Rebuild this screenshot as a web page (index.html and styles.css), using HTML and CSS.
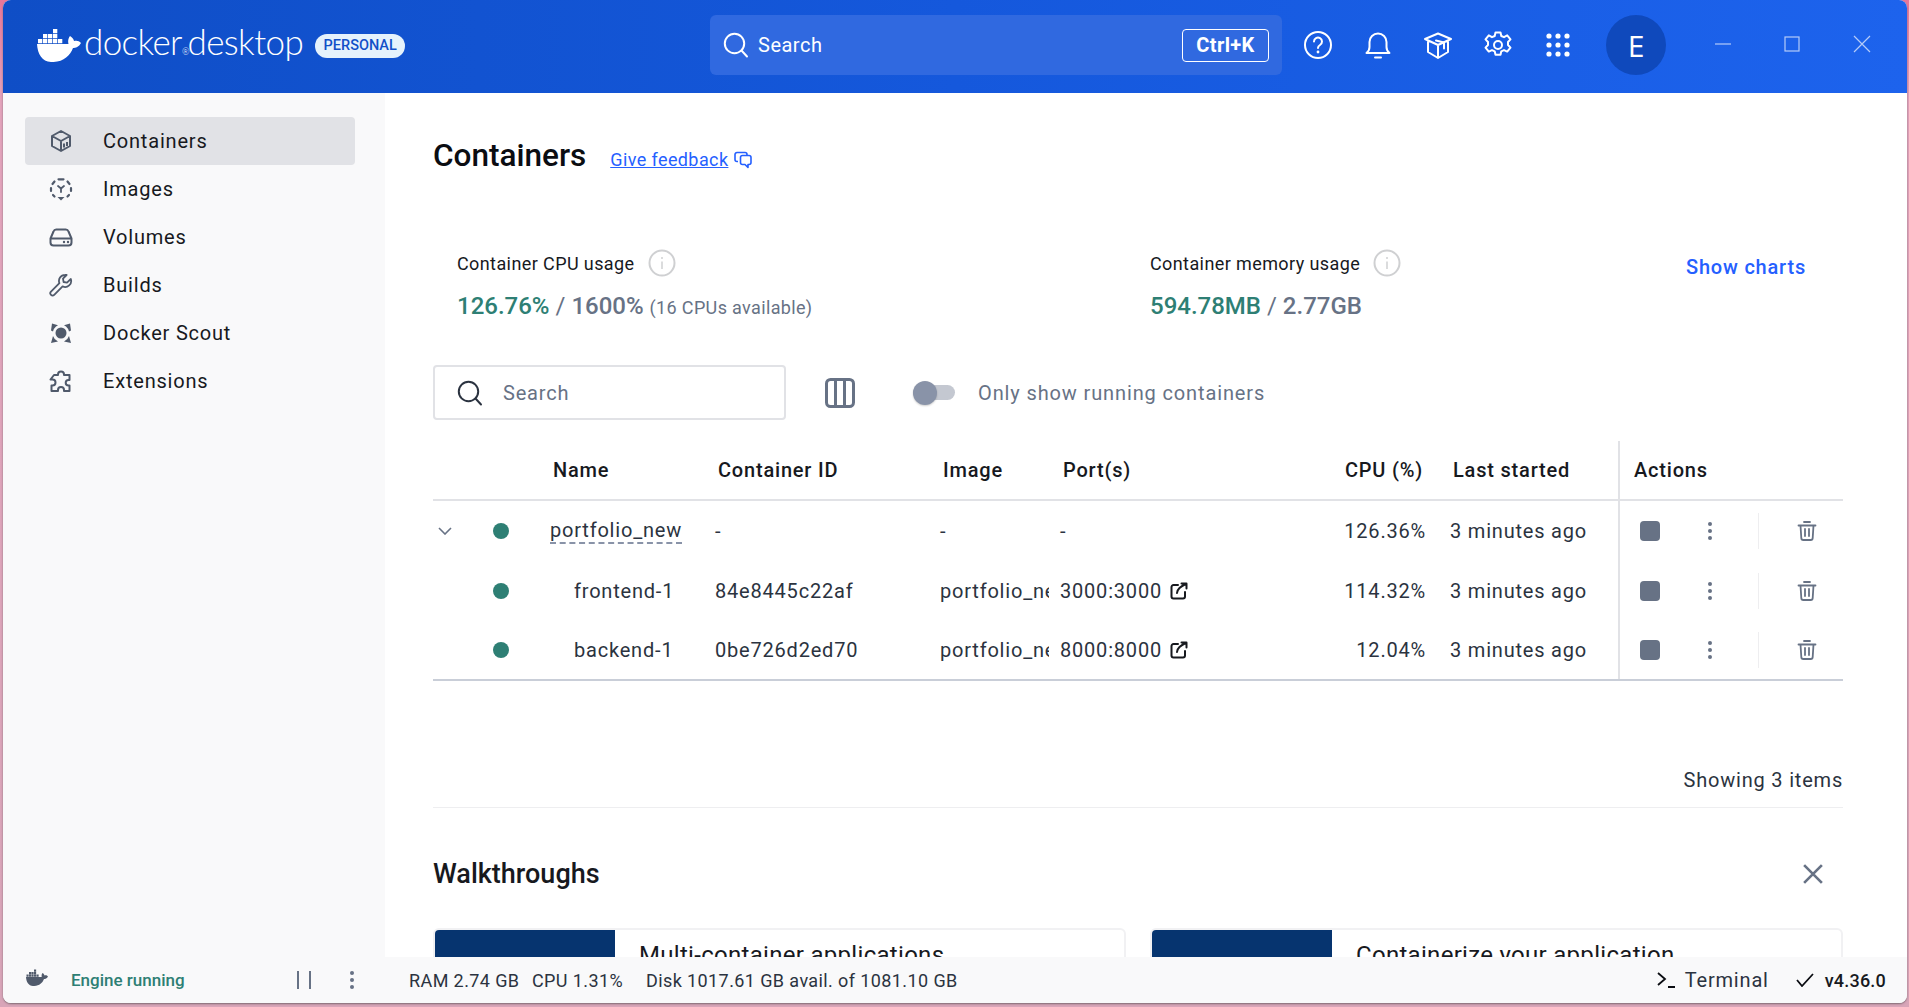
FILE: index.html
```html
<!DOCTYPE html>
<html lang="en">
<head>
<meta charset="utf-8">
<title>Docker Desktop</title>
<link rel="stylesheet" href="styles.css">
</head>
<body>
<svg class="defs" width="0" height="0" aria-hidden="true">
  <defs>
    <symbol id="whale" viewBox="0 0 44 34">
      <path fill="currentColor" d="M0 16H31.5C30.8 14 31 10.500 33 8C35.500 9.500 36.800 11.500 37 13C39.500 12.300 42 12.500 44 15C42 19 38.500 20 36 20C33 28 26 34.500 14 34C5 33.500 .5 26 0 16Z"/>
      <path fill="currentColor" d="M1 11h4.300v4.300H1zM6 11h4.300v4.300H6zM11 11h4.300v4.300H11zM16 11h4.300v4.300H16zM21 11h4.300v4.300H21zM6 6h4.300v4.300H6zM11 6h4.300v4.300H11zM16 6h4.300v4.300H16zM16 1h4.300v4.300H16z"/>
    </symbol>
    <symbol id="stop-trash" viewBox="0 0 20 20">
      <path fill="none" stroke="currentColor" stroke-width="1.800" stroke-linecap="round" stroke-linejoin="round" d="M1.500 4.500h17M7 1h6M3.500 4.500l.8 12.500a2 2 0 0 0 2 2h7.400a2 2 0 0 0 2-2l.8-12.500M8 8v7M12 8v7"/>
    </symbol>
    <symbol id="kebab" viewBox="0 0 6 20">
      <circle cx="3" cy="3" r="2" fill="currentColor"/><circle cx="3" cy="10" r="2" fill="currentColor"/><circle cx="3" cy="17" r="2" fill="currentColor"/>
    </symbol>
    <symbol id="ext" viewBox="0 0 18 18">
      <path fill="none" stroke="currentColor" stroke-width="2" stroke-linecap="round" stroke-linejoin="round" d="M8 3H3.500A2 2 0 0 0 1.500 5v9.500a2 2 0 0 0 2 2H13a2 2 0 0 0 2-2V10M7 11C7.500 7 10 5 16.500 1.500M11.500 1.500h5v5"/>
    </symbol>
    <symbol id="info" viewBox="0 0 28 28">
      <circle cx="14" cy="14" r="12.500" fill="none" stroke="#cfd0d2" stroke-width="2"/>
      <path stroke="#cfd0d2" stroke-width="1.500" d="M14 12.500v7.500"/><circle cx="14" cy="9" r="1" fill="#cfd0d2"/>
    </symbol>
    <symbol id="lens" viewBox="0 0 26 26">
      <circle cx="11.500" cy="11.500" r="9.700" fill="none" stroke="currentColor" stroke-width="2"/>
      <path stroke="currentColor" stroke-width="2" stroke-linecap="round" d="M18.500 18.500l5.500 6"/>
    </symbol>
  </defs>
</svg>
<div class="window">
  <header class="topbar">
    <div class="brand">
      <svg class="whale-logo" width="44" height="34"><use href="#whale"/></svg>
      <span class="wordmarks"><span class="wordmark">docker<span class="reg">®</span></span><span class="wordmark wordmark-second">desktop</span></span>
      <span class="badge">PERSONAL</span>
    </div>
    <div class="omnibox">
      <svg class="omni-lens" width="26" height="26"><use href="#lens"/></svg>
      <span class="omni-text">Search</span>
      <span class="kbd">Ctrl+K</span>
    </div>
    <div class="top-icons">
      <svg class="t-ico" viewBox="0 0 30 30" width="30" height="30"><circle cx="15" cy="15" r="13" fill="none" stroke="#fff" stroke-width="2"/><path fill="none" stroke="#fff" stroke-width="2" stroke-linecap="round" d="M11 11.500a4 4 0 1 1 6 3.500c-1.300.8-2 1.500-2 3"/><circle cx="15" cy="22" r="1.400" fill="#fff"/></svg>
      <svg class="t-ico" viewBox="0 0 30 30" width="30" height="30"><path fill="none" stroke="#fff" stroke-width="2" stroke-linejoin="round" d="M3.500 23c2-1.500 3-3.500 3-6v-5a8.500 8.500 0 0 1 17 0v5c0 2.500 1 4.500 3 6z"/><path stroke="#fff" stroke-width="2" stroke-linecap="round" d="M12 27.500h6"/></svg>
      <svg class="t-ico" viewBox="0 0 30 30" width="30" height="30"><path fill="none" stroke="#fff" stroke-width="2" stroke-linejoin="round" stroke-linecap="round" d="M15 3.500L28 9 15 15 2 9zM5 11.500V22l10 6 10-6V11.500M15 15v13M21 12.500v6"/><path fill="none" stroke="#fff" stroke-width="2" stroke-linecap="round" d="M13 10.500l8 2"/></svg>
      <svg class="t-ico" viewBox="0 0 30 30" width="30" height="30"><circle cx="15" cy="15" r="4" fill="none" stroke="#fff" stroke-width="2"/><path fill="none" stroke="#fff" stroke-width="2" stroke-linejoin="round" d="M12.500 2.500h5l.8 3.500 2.700 1.200 3.200-1.800 3.300 4-2.500 2.600v3l2.500 2.600-3.300 4-3.200-1.500-2.700 1.200-.8 3.500h-5l-.8-3.500-2.700-1.200-3.200 1.500-3.300-4 2.500-2.600v-3L2.500 9.400l3.300-4L9 7.200 11.700 6z"/></svg>
      <svg class="t-ico" viewBox="0 0 30 30" width="30" height="30"><g fill="#fff"><circle cx="6" cy="6" r="2.600"/><circle cx="15" cy="6" r="2.600"/><circle cx="24" cy="6" r="2.600"/><circle cx="6" cy="15" r="2.600"/><circle cx="15" cy="15" r="2.600"/><circle cx="24" cy="15" r="2.600"/><circle cx="6" cy="24" r="2.600"/><circle cx="15" cy="24" r="2.600"/><circle cx="24" cy="24" r="2.600"/></g></svg>
    </div>
    <div class="avatar">E</div>
    <div class="winctl">
      <svg width="16" height="16" viewBox="0 0 16 16"><path stroke="#b5cbf8" stroke-width="1.200" d="M0 8h16"/></svg>
      <svg width="16" height="16" viewBox="0 0 16 16"><rect x="1" y="1" width="14" height="14" fill="none" stroke="#b5cbf8" stroke-width="1.200"/></svg>
      <svg width="18" height="18" viewBox="0 0 18 18"><path stroke="#b5cbf8" stroke-width="1.200" d="M1 1l16 16M17 1L1 17"/></svg>
    </div>
  </header>

  <div class="body">
    <aside class="sidebar">
      <nav class="nav">
        <a class="nav-item nav-active">
          <svg class="nav-ico" viewBox="0 0 24 24" width="24" height="24"><path fill="none" stroke="currentColor" stroke-width="2" stroke-linejoin="round" d="M12 2l9 5v10l-9 5-9-5V7zM3 7l9 5 9-5M12 12v10M15 14.500v4M18 13v4"/></svg>
          <span>Containers</span>
        </a>
        <a class="nav-item">
          <svg class="nav-ico" viewBox="0 0 24 24" width="24" height="24"><path fill="none" stroke="currentColor" stroke-width="2.200" stroke-linecap="round" d="M9.500 2.300h5M18.500 4.500l2 2.500M22 11v3M20 18l-1.500 1.500M5.500 19.500L4 18M2 14v-3M3.500 7l2-2.500"/><path fill="none" stroke="currentColor" stroke-width="1.800" stroke-linecap="round" d="M9 9l3 2.500L15 9M12 11.500V15"/><path fill="currentColor" d="M12 23.500l-3.500-3.500h7z"/></svg>
          <span>Images</span>
        </a>
        <a class="nav-item">
          <svg class="nav-ico" viewBox="0 0 24 24" width="24" height="24"><path fill="none" stroke="currentColor" stroke-width="2" stroke-linejoin="round" d="M1.500 13.500l3-7a3 3 0 0 1 3-2h9a3 3 0 0 1 3 2l3 7v4a3 3 0 0 1-3 3h-15a3 3 0 0 1-3-3zM1.500 13.500h21"/><circle cx="15" cy="17" r="1.200" fill="currentColor"/><circle cx="19" cy="17" r="1.200" fill="currentColor"/></svg>
          <span>Volumes</span>
        </a>
        <a class="nav-item">
          <svg class="nav-ico" viewBox="0 0 24 24" width="24" height="24"><path fill="none" stroke="currentColor" stroke-width="1.800" stroke-linejoin="round" d="M16 2a6 6 0 0 0-5.600 8.200L2 18.600a2.200 2.200 0 0 0 3.200 3.200l8.400-8.400A6 6 0 0 0 21.800 6l-3.800 3.600-3.400-.6-.6-3.400L17.600 2A6 6 0 0 0 16 2z"/></svg>
          <span>Builds</span>
        </a>
        <a class="nav-item">
          <svg class="nav-ico" viewBox="0 0 24 24" width="24" height="24"><circle cx="12" cy="12" r="5.500" fill="currentColor"/><path fill="currentColor" d="M2 9.500L3 2.500l6 1.800-2 1.200a9 9 0 0 0-3 5zM22 9.500l-1-7-6 1.800 2 1.200a9 9 0 0 1 3 5zM2 22l2-7a9 9 0 0 0 5 5.500zM22 22l-2-7a9 9 0 0 1-5 5.500z"/></svg>
          <span>Docker Scout</span>
        </a>
        <a class="nav-item">
          <svg class="nav-ico" viewBox="0 0 24 24" width="24" height="24"><path fill="none" stroke="currentColor" stroke-width="2" stroke-linejoin="round" d="M9 5.500a3 3 0 1 1 6 0V6h5.500v5h-1a2.800 2.800 0 0 0 0 5.600h1V22H15v-1a3 3 0 0 0-6 0v1H2.500v-5.500h1a3 3 0 0 0 0-6h-2L5 6h4z"/></svg>
          <span>Extensions</span>
        </a>
      </nav>
    </aside>

    <main class="main">
      <div class="page-head">
        <h1 class="page-title">Containers</h1>
        <a class="feedback">Give feedback</a>
        <svg class="feedback-ico" viewBox="0 0 18 18" width="18" height="18"><path fill="none" stroke="currentColor" stroke-width="1.600" stroke-linejoin="round" d="M13 4.500V3.500a2 2 0 0 0-2-2H3a2 2 0 0 0-2 2v5a2 2 0 0 0 2 2h1M6.500 6.500a2 2 0 0 1 2-2H15a2 2 0 0 1 2 2v5a2 2 0 0 1-2 2h-1v3l-3-3H8.500a2 2 0 0 1-2-2z"/></svg>
      </div>

      <section class="stats">
        <div class="stat stat-cpu">
          <div class="stat-label"><span>Container CPU usage</span><svg width="28" height="28"><use href="#info"/></svg></div>
          <div class="stat-value"><span class="good">126.76%</span> <span class="slash">/</span> <b class="limit">1600%</b> <small class="avail">(16 CPUs available)</small></div>
        </div>
        <div class="stat stat-mem">
          <div class="stat-label"><span>Container memory usage</span><svg width="28" height="28"><use href="#info"/></svg></div>
          <div class="stat-value"><span class="good">594.78MB</span> <span class="slash">/</span> <b class="limit">2.77GB</b></div>
        </div>
        <a class="show-charts">Show charts</a>
      </section>

      <section class="filters">
        <div class="searchbox">
          <svg width="26" height="26"><use href="#lens"/></svg>
          <span>Search</span>
        </div>
        <svg class="columns-ico" viewBox="0 0 30 30" width="30" height="30"><rect x="1.500" y="1.500" width="27" height="27" rx="4" fill="none" stroke="currentColor" stroke-width="3"/><path stroke="currentColor" stroke-width="3" d="M10.500 2v26M19.500 2v26"/></svg>
        <div class="toggle"><span class="thumb"></span></div>
        <span class="toggle-label">Only show running containers</span>
      </section>

      <section class="table">
        <div class="tr th">
          <div></div><div></div>
          <div class="hcell">Name</div>
          <div class="hcell">Container ID</div>
          <div class="hcell">Image</div>
          <div class="hcell">Port(s)</div>
          <div class="hcell cell-r">CPU (%)</div>
          <div class="hcell cell-last">Last started</div>
          <div class="hcell cell-actions">Actions</div>
        </div>

        <div class="tr">
          <div class="cell"><svg class="chev" viewBox="0 0 14 8" width="14" height="8"><path fill="none" stroke="currentColor" stroke-width="1.600" d="M1 1l6 6 6-6"/></svg></div>
          <div class="cell"><span class="dot"></span></div>
          <div class="cell"><span class="stack-name">portfolio_new</span></div>
          <div class="cell">-</div>
          <div class="cell">-</div>
          <div class="cell">-</div>
          <div class="cell cell-r">126.36%</div>
          <div class="cell cell-last">3 minutes ago</div>
          <div class="cell cell-actions">
            <span class="stop"></span>
            <svg class="kebab" width="6" height="20"><use href="#kebab"/></svg>
            <span class="sep"></span>
            <svg class="trash" width="20" height="20"><use href="#stop-trash"/></svg>
          </div>
        </div>

        <div class="tr">
          <div class="cell"></div>
          <div class="cell"><span class="dot"></span></div>
          <div class="cell cell-child">frontend-1</div>
          <div class="cell">84e8445c22af</div>
          <div class="cell"><span class="img-name">portfolio_new-frontend</span></div>
          <div class="cell">3000:3000<svg class="ext" width="18" height="18"><use href="#ext"/></svg></div>
          <div class="cell cell-r">114.32%</div>
          <div class="cell cell-last">3 minutes ago</div>
          <div class="cell cell-actions">
            <span class="stop"></span>
            <svg class="kebab" width="6" height="20"><use href="#kebab"/></svg>
            <span class="sep"></span>
            <svg class="trash" width="20" height="20"><use href="#stop-trash"/></svg>
          </div>
        </div>

        <div class="tr tr-end">
          <div class="cell"></div>
          <div class="cell"><span class="dot"></span></div>
          <div class="cell cell-child">backend-1</div>
          <div class="cell">0be726d2ed70</div>
          <div class="cell"><span class="img-name">portfolio_new-backend</span></div>
          <div class="cell">8000:8000<svg class="ext" width="18" height="18"><use href="#ext"/></svg></div>
          <div class="cell cell-r">12.04%</div>
          <div class="cell cell-last">3 minutes ago</div>
          <div class="cell cell-actions">
            <span class="stop"></span>
            <svg class="kebab" width="6" height="20"><use href="#kebab"/></svg>
            <span class="sep"></span>
            <svg class="trash" width="20" height="20"><use href="#stop-trash"/></svg>
          </div>
        </div>
      </section>

      <div class="showing">Showing 3 items</div>

      <section class="walk">
        <div class="walk-head">
          <h2 class="walk-title">Walkthroughs</h2>
          <svg class="walk-close" viewBox="0 0 18 18" width="20" height="20"><path stroke="currentColor" stroke-width="2.400" d="M1 1l16 16M17 1L1 17"/></svg>
        </div>
        <div class="walk-cards">
          <article class="card"><div class="card-art"></div><div class="card-title">Multi-container applications</div></article>
          <article class="card"><div class="card-art"></div><div class="card-title">Containerize your application</div></article>
        </div>
      </section>
    </main>
  </div>

  <footer class="footer">
    <div class="foot-left">
      <svg class="foot-whale" width="22" height="17"><use href="#whale"/></svg>
      <span class="engine">Engine running</span>
      <span class="pause"></span>
      <svg class="foot-kebab" width="6" height="20"><use href="#kebab"/></svg>
    </div>
    <div class="foot-stats">
      <span class="m-ram">RAM 2.74 GB</span>
      <span class="m-cpu">CPU 1.31%</span>
      <span>Disk 1017.61 GB avail. of 1081.10 GB</span>
    </div>
    <div class="foot-right">
      <svg viewBox="0 0 18 16" width="18" height="16"><path fill="none" stroke="#0b0d12" stroke-width="1.800" d="M1 1l7 6-7 6M11 15h7"/></svg>
      <span class="terminal">Terminal</span>
      <svg class="check" viewBox="0 0 18 14" width="18" height="14"><path fill="none" stroke="#0b0d12" stroke-width="1.800" d="M1 7l5 6L17 1"/></svg>
      <span class="version">v4.36.0</span>
    </div>
  </footer>
</div>
</body>
</html>
```

FILE: styles.css
```css
* { box-sizing: border-box; }
html, body { margin: 0; height: 100%; overflow: hidden; }
body {
  background: linear-gradient(180deg, #e7769a 0, #e3a3bb 10%, #d8a5b8 100%);
  font-family: Roboto, "Liberation Sans", sans-serif;
  font-size: 20px;
  letter-spacing: .8px;
  color: #17191e;
}
.defs { position: absolute; }
.window {
  margin-left: 3px;
  width: 1904px;
  height: 1003px;
  display: flex;
  flex-direction: column;
  border-radius: 8px;
  overflow: hidden;
  background: #fff;
  box-shadow: 0 1px 2px #7d6a72;
}

/* top bar */
.topbar {
  flex: 0 0 93px;
  display: flex;
  align-items: center;
  padding-bottom: 3px;
  color: #fff;
  background: linear-gradient(90deg, #0f4ec6 0, #1558dc 50%, #1d63ed 100%);
}
.brand { display: flex; align-items: center; padding-left: 34px; width: 707px; }
.whale-logo { flex: none; }
.wordmarks { margin: 3px 0 0 3px; line-height: 40px; white-space: nowrap; }
.wordmark { font-family: Lato, sans-serif; font-weight: 300; font-size: 35px; letter-spacing: -.6px; }
.wordmark-second { margin-left: -2px; }
.reg { font-size: 9px; letter-spacing: 0; }
.badge {
  margin: 2px 0 0 12px;
  padding: 0 8.500px;
  height: 24px;
  line-height: 24px;
  border-radius: 12px;
  background: #e5f2fc;
  color: #1250c8;
  font-size: 14.500px;
  font-weight: 500;
  letter-spacing: 0;
}
.omnibox {
  width: 572px;
  height: 60px;
  display: flex;
  align-items: center;
  padding: 0 13px 0 13px;
  background: #3069e0;
  border-radius: 6px;
}
.omni-lens { flex: none; }
.omni-text { margin-left: 9px; flex: 1; letter-spacing: .5px; }
.kbd {
  width: 87px;
  height: 33px;
  line-height: 31px;
  text-align: center;
  border: 1px solid #fff;
  border-radius: 4px;
  font-weight: 700;
  letter-spacing: .4px;
}
.top-icons { display: flex; gap: 30px; margin-left: 21px; }
.t-ico { flex: none; }
.avatar {
  margin-left: 33px;
  width: 60px;
  height: 60px;
  border-radius: 50%;
  background: #0f49bc;
  display: flex;
  align-items: center;
  justify-content: center;
  font-family: "Open Sans", sans-serif;
  font-size: 30px;
  letter-spacing: 0;
}
.winctl { display: flex; align-items: center; gap: 53px; margin: -2px 0 0 49px; }

/* layout */
.body { flex: 1; min-height: 0; display: flex; }
.sidebar { flex: 0 0 382px; background: #f9f9fa; padding: 24px 30px 0 22px; }
.nav { display: flex; flex-direction: column; }
.nav-item { height: 48px; display: flex; align-items: center; padding-left: 24px; border-radius: 4px; }
.nav-active { background: #e1e2e6; }
.nav-ico { flex: none; color: #505a6b; margin-right: 30px; }

.main { flex: 1; min-width: 0; overflow: hidden; padding: 42px 64px 0 48px; }
.page-head { display: flex; align-items: center; height: 40px; color: #2560ff; }
.page-title { margin: 0; font-size: 31.500px; font-weight: 500; color: #0b0d12; letter-spacing: 0; }
.feedback { margin-left: 24px; margin-top: 8px; font-size: 18px; letter-spacing: .4px; text-decoration: underline; }
.feedback-ico { margin-left: 6px; margin-top: 9px; }

.stats { display: flex; margin-top: 74px; padding-left: 24px; height: 102px; }
.stat-cpu { width: 693px; }
.stat-mem { width: 536px; }
.stat-label { display: flex; align-items: center; gap: 13px; height: 28px; font-size: 18px; letter-spacing: .4px; color: #17191e; }
.stat-value { margin-top: 14px; font-size: 24px; font-weight: 500; color: #677285; line-height: 30px; letter-spacing: 0; }
.good { color: #2e7f74; }
.slash { font-weight: 400; }
.limit { font-weight: 500; }
.avail { font-size: 18px; font-weight: 400; letter-spacing: .35px; }
.show-charts { font-weight: 500; color: #2560ff; margin-top: 4px; line-height: 28px; height: 28px; }

.filters { display: flex; align-items: center; margin-top: 14px; height: 55px; color: #677285; }
.searchbox {
  width: 353px;
  height: 55px;
  display: flex;
  align-items: center;
  gap: 20px;
  padding-left: 22px;
  border: 2px solid #e1e2e6;
  border-radius: 4px;
}
.searchbox svg { color: #2b3340; flex: none; }
.columns-ico { margin-left: 39px; color: #677285; flex: none; }
.toggle { position: relative; width: 42px; height: 15px; margin-left: 58px; border-radius: 8px; background: #c4c8d1; }
.thumb { position: absolute; left: 0; top: -4px; width: 24px; height: 24px; border-radius: 50%; background: #8993a8; box-shadow: 0 1px 2px #0003; }
.toggle-label { margin-left: 23px; letter-spacing: .87px; }

/* table */
.table { margin-top: 21px; }
.tr {
  display: grid;
  grid-template-columns: 48px 69px 165px 225px 120px 270px 96px 192px 225px;
  height: 60px;
}
.th { border-bottom: 2px solid #e1e2e6; font-weight: 500; color: #17191e; }
.hcell { display: flex; align-items: center; padding-left: 3px; }
.cell { display: flex; align-items: center; min-width: 0; white-space: nowrap; color: #2b3340; }
.cell-r { justify-content: flex-end; padding-left: 0; }
.hcell.cell-r { padding-right: 3px; }
.cell-last { padding-left: 24px; }
.hcell.cell-last { padding-left: 27px; }
.cell-actions { border-left: 2px solid #e1e2e6; }
.hcell.cell-actions { padding-left: 14px; }
.chev { margin-left: 5px; color: #677285; }
.dot { width: 16px; height: 16px; margin-left: 12px; border-radius: 50%; background: #2e7f74; }
.stack-name { border-bottom: 2px dashed #8993a8; line-height: 24px; }
.cell-child { padding-left: 24px; }
.img-name { display: block; width: 109px; overflow: hidden; }
.ext { margin-left: 8px; color: #17191e; flex: none; }
.stop { width: 20px; height: 20px; margin-left: 20px; border-radius: 4px; background: #677285; flex: none; }
.kebab { margin-left: 47px; color: #677285; flex: none; }
.sep { width: 1px; height: 36px; margin-left: 45px; background: #eeeef0; flex: none; }
.trash { margin-left: 38px; color: #677285; flex: none; }
.tr-end { height: 60px; border-bottom: 2px solid #c9ced8; }

.showing { margin-top: 84px; height: 43px; text-align: right; border-bottom: 1px solid #eeeef0; color: #2b3340; line-height: 30px; }

.walk { margin-top: 47px; }
.walk-head { display: flex; align-items: center; justify-content: space-between; height: 38px; }
.walk-title { margin: 0; font-size: 27px; font-weight: 500; letter-spacing: 0; color: #17191e; }
.walk-close { margin-right: 20px; color: #677285; }
.walk-cards { display: grid; grid-template-columns: 693px 693px; gap: 24px; margin-top: 35px; }
.card { display: flex; height: 200px; border: 2px solid #f1f1f3; border-radius: 6px; overflow: hidden; }
.card-art { flex: 0 0 180px; background: #06346f; }
.card-title { margin: 11px 0 0 24px; font-size: 24px; color: #17191e; letter-spacing: .3px; }

/* footer */
.footer {
  flex: 0 0 46px;
  display: flex;
  align-items: center;
  background: #f9f9fa;
  font-size: 18px;
  letter-spacing: .4px;
  color: #2b3340;
}
.foot-left { display: flex; align-items: center; width: 406px; padding-left: 23px; }
.foot-whale { color: #505a6b; flex: none; margin-top: -6px; }
.engine { margin-left: 23px; width: 113px; font-size: 17px; font-weight: 500; color: #2e7f74; letter-spacing: 0; white-space: nowrap; }
.pause { width: 14px; height: 18px; margin-left: 113px; border-left: 2px solid #677285; border-right: 2px solid #677285; flex: none; }
.foot-kebab { margin-left: 38px; color: #677285; flex: none; }
.foot-stats { flex: 1; display: flex; white-space: nowrap; }
.m-ram { width: 123px; }
.m-cpu { width: 114px; }
.foot-right { display: flex; align-items: center; padding-right: 21px; }
.terminal { margin-left: 10px; font-size: 20px; letter-spacing: .8px; }
.check { margin-left: 27px; }
.version { margin-left: 11px; font-weight: 500; letter-spacing: .2px; color: #17191e; }
```
